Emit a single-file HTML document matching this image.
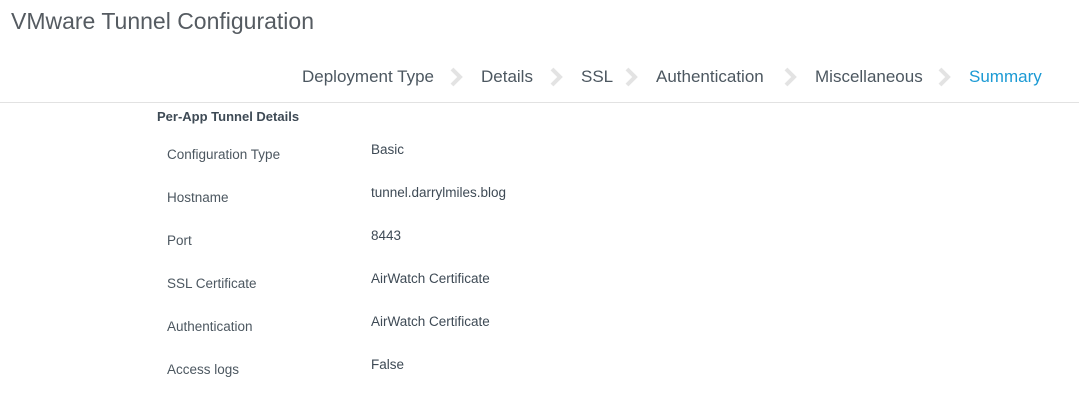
<!DOCTYPE html>
<html><head><style>
body{margin:0;width:1079px;height:410px;background:#fff;font-family:"Liberation Sans",sans-serif;position:relative;overflow:hidden}
.a{position:absolute;white-space:nowrap}
.t{left:11px;top:8px;font-size:23px;color:#555b61}
.n{top:67px;font-size:17px;color:#4c5760}
.line{position:absolute;left:0;top:102px;width:1079px;height:1px;background:#e2e2e2}
.ch{position:absolute;top:67px}
.h{left:157px;top:109px;font-size:13px;font-weight:bold;color:#3e4a55}
.l{left:167px;font-size:13.5px;color:#4c5760}
.v{left:371px;font-size:13.5px;color:#3e4a55}
</style></head><body>
<div class="a t">VMware Tunnel Configuration</div>
<div class="a n" style="left:302px">Deployment Type</div>
<div class="a n" style="left:481px">Details</div>
<div class="a n" style="left:581px">SSL</div>
<div class="a n" style="left:656px">Authentication</div>
<div class="a n" style="left:815px">Miscellaneous</div>
<div class="a n" style="left:969px;color:#1b9ad4">Summary</div>
<svg class="ch" style="left:448px" width="16" height="20"><path d="M4 2 L12 10 L4 18" stroke="#e3e3e3" stroke-width="4" fill="none"/></svg>
<svg class="ch" style="left:548px" width="16" height="20"><path d="M4 2 L12 10 L4 18" stroke="#e3e3e3" stroke-width="4" fill="none"/></svg>
<svg class="ch" style="left:623px" width="16" height="20"><path d="M4 2 L12 10 L4 18" stroke="#e3e3e3" stroke-width="4" fill="none"/></svg>
<svg class="ch" style="left:782px" width="16" height="20"><path d="M4 2 L12 10 L4 18" stroke="#e3e3e3" stroke-width="4" fill="none"/></svg>
<svg class="ch" style="left:936px" width="16" height="20"><path d="M4 2 L12 10 L4 18" stroke="#e3e3e3" stroke-width="4" fill="none"/></svg>
<div class="line"></div>
<div class="a h">Per-App Tunnel Details</div>
<div class="a l" style="top:147px">Configuration Type</div><div class="a v" style="top:142px">Basic</div>
<div class="a l" style="top:190px">Hostname</div><div class="a v" style="top:185px">tunnel.darrylmiles.blog</div>
<div class="a l" style="top:233px">Port</div><div class="a v" style="top:228px">8443</div>
<div class="a l" style="top:276px">SSL Certificate</div><div class="a v" style="top:271px">AirWatch Certificate</div>
<div class="a l" style="top:319px">Authentication</div><div class="a v" style="top:314px">AirWatch Certificate</div>
<div class="a l" style="top:362px">Access logs</div><div class="a v" style="top:357px">False</div>
</body></html>
